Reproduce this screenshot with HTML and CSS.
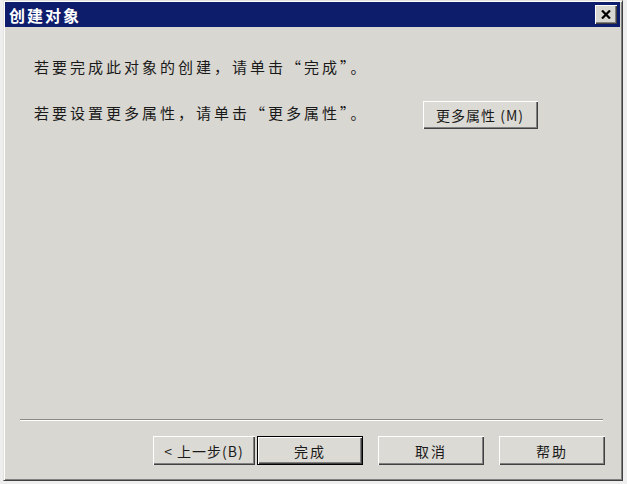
FILE: index.html
```html
<!DOCTYPE html>
<html lang="zh-CN">
<head>
<meta charset="utf-8">
<title>创建对象</title>
<link rel="stylesheet" href="styles.css">
</head>
<body>
<div class="dialog">
  <div class="titlebar">
    <span class="title">创建对象</span>
    <button class="close" aria-label="关闭">
      <svg width="10" height="9" viewBox="0 0 10 9"><path d="M1 0.5 L9 8.5 M9 0.5 L1 8.5" stroke="#000" stroke-width="2.2" fill="none"/></svg>
    </button>
  </div>
  <div class="content">
    <p class="line">若要完成此对象的创建，请单击“完成”。</p>
    <div class="row">
      <p class="line">若要设置更多属性，请单击“更多属性”。</p>
      <button class="btn more">更多属性 (M)</button>
    </div>
  </div>
  <div class="footer">
    <div class="separator"></div>
    <div class="buttons">
      <button class="btn back">&lt; 上一步(B)</button>
      <button class="btn default">完成</button>
      <button class="btn">取消</button>
      <button class="btn">帮助</button>
    </div>
  </div>
</div>
</body>
</html>
```
FILE: styles.css
```css
html, body {
  margin: 0;
  padding: 0;
}
body {
  width: 627px;
  height: 484px;
  background: #eeeeee;
  font-family: "Noto Sans CJK SC", "Liberation Sans", sans-serif;
  overflow: hidden;
}
.dialog {
  box-sizing: border-box;
  margin-left: 3px;
  width: 620px;
  height: 481px;
  background: #d9d7d1;
  border: 1px solid;
  border-color: #e4e2dc #404040 #404040 #e4e2dc;
  box-shadow: inset 1px 1px #ffffff, inset -1px -1px #808080;
  padding: 1px 2px 0 1px;
  display: flex;
  flex-direction: column;
}
.titlebar {
  height: 25px;
  background: #0e1c6c;
  display: flex;
  align-items: center;
  justify-content: space-between;
  padding: 0 3px 0 4px;
}
.title {
  color: #ffffff;
  font-weight: bold;
  font-size: 16px;
  letter-spacing: 2px;
}
.close {
  box-sizing: border-box;
  width: 22px;
  height: 19px;
  padding: 0;
  background: #d9d7d1;
  border: none;
  box-shadow: inset 1px 1px #ffffff, inset -1px -1px #404040, inset -2px -2px #808080;
  display: flex;
  align-items: center;
  justify-content: center;
}
.content {
  flex: 1;
  padding: 30px 0 0 29px;
}
.line {
  margin: 0;
  font-size: 15px;
  letter-spacing: 3px;
  line-height: 20px;
  color: #1a1a1a;
}
.row {
  display: flex;
  align-items: center;
  margin-top: 24px;
}
.row .line {
  margin-top: -4px;
}
.btn {
  box-sizing: border-box;
  height: 29px;
  width: 106px;
  padding: 0;
  background: #dcdad4;
  border: none;
  font-family: "Noto Sans CJK SC", "Liberation Sans", sans-serif;
  font-size: 14px;
  letter-spacing: 2px;
  color: #1a1a1a;
  box-shadow: inset 1px 1px #ffffff, inset -1px -1px #404040, inset -2px -2px #808080;
}
.more {
  width: 115px;
  height: 28px;
  margin-left: 54px;
  letter-spacing: 1px;
}
.footer {
  padding: 0 15px 15px 15px;
}
.separator {
  height: 0;
  border-top: 1px solid #8c8a86;
  border-bottom: 1px solid #ffffff;
  margin-right: 2px;
}
.buttons {
  display: flex;
  justify-content: flex-end;
  margin-top: 15px;
}
.back {
  width: 102px;
  margin-right: 2px;
  letter-spacing: 1px;
}
.default {
  margin-right: 15px;
  border: 1px solid #000000;
}
.buttons .btn:last-child {
  margin-left: 15px;
}
```
